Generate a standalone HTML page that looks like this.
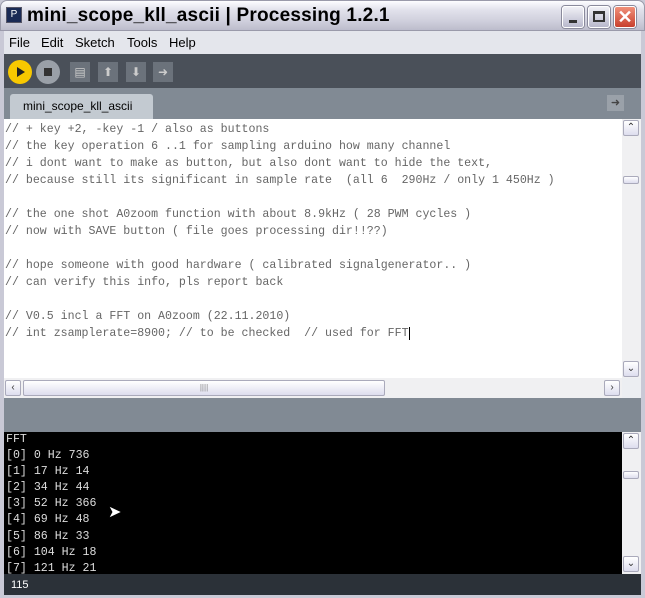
<!DOCTYPE html>
<html><head><style>
*{margin:0;padding:0;box-sizing:border-box}
body{width:645px;height:598px;overflow:hidden;background:#c9c9d6;position:relative;font-family:"Liberation Sans",sans-serif}
.abs{position:absolute}
.title{left:0;top:0;width:645px;height:31px;background:linear-gradient(#fdfdff,#e2e2ec 30%,#cfcfdc 70%,#bcbccc);border-radius:7px 7px 0 0;border:1px solid #9a9aaa}
.title span{position:absolute;left:26px;top:4px;color:#000;font-weight:bold;font-size:19px;letter-spacing:0.2px}
.mono{font-family:"Liberation Mono",monospace;font-size:11.6px;white-space:pre}
.btn{position:absolute;top:5px;width:22px;height:22px;border:1px solid #fff;border-radius:3px;background:linear-gradient(#f0f0f6,#b8b8cc);box-shadow:0 0 0 1px #8a8a9c}
.tb{position:absolute;top:62px;width:20px;height:20px;background:#6b727b}
.sb{background:#f0f0f2}
.arr{position:absolute;width:16px;height:16px;border:1px solid #aab;background:linear-gradient(#fff,#dde);border-radius:2px;font-size:10px;text-align:center;line-height:14px;color:#333}
</style></head><body>
<div class="abs title"><div class="abs" style="left:5px;top:6px;width:16px;height:16px;background:#1a2a55;border:1px solid #556;color:#fff;font-size:10px;line-height:14px;text-align:center">P</div><span>mini_scope_kll_ascii | Processing 1.2.1</span>
<div class="btn" style="left:561px"><div class="abs" style="left:6px;top:13px;width:8px;height:3px;background:#333"></div></div>
<div class="btn" style="left:587px"><div class="abs" style="left:4px;top:4px;width:12px;height:11px;border:2px solid #333;border-top-width:3px"></div></div>
<div class="btn" style="left:613px;background:linear-gradient(#f0907a,#c8402e);color:#fff;font-size:18px;font-weight:bold;text-align:center;line-height:20px">✕</div>
</div>
<div class="abs" style="left:4px;top:31px;width:637px;height:563px;background:#eceef2"></div>
<div class="abs" style="left:4px;top:31px;width:637px;height:23px;background:#e4e6ec;font-size:13px;color:#000"><span class="abs" style="left:5px;top:4px">File</span><span class="abs" style="left:37px;top:4px">Edit</span><span class="abs" style="left:71px;top:4px">Sketch</span><span class="abs" style="left:123px;top:4px">Tools</span><span class="abs" style="left:165px;top:4px">Help</span></div>
<div class="abs" style="left:4px;top:54px;width:637px;height:34px;background:#4a5059"></div>
<div class="abs" style="left:8px;top:60px;width:24px;height:24px;border-radius:50%;background:#f8c800"><div class="abs" style="left:9px;top:7px;border-left:8px solid #222;border-top:5px solid transparent;border-bottom:5px solid transparent"></div></div>
<div class="abs" style="left:36px;top:60px;width:24px;height:24px;border-radius:50%;background:#9aa0a8"><div class="abs" style="left:8px;top:8px;width:8px;height:8px;background:#333"></div></div>
<div class="tb" style="left:70px;color:#ccc;font-size:12px;text-align:center;line-height:20px">▤</div>
<div class="tb" style="left:98px;color:#ccc;font-size:12px;text-align:center;line-height:20px">⬆</div>
<div class="tb" style="left:126px;color:#ccc;font-size:12px;text-align:center;line-height:20px">⬇</div>
<div class="tb" style="left:153px;color:#ccc;font-size:12px;text-align:center;line-height:20px">➜</div>
<div class="abs" style="left:4px;top:88px;width:637px;height:31px;background:#818a94"></div>
<div class="abs" style="left:10px;top:94px;width:143px;height:25px;background:#c3cad1;border-radius:3px 3px 0 0;font-size:12px;color:#000;padding:5px 0 0 13px">mini_scope_kll_ascii</div>
<div class="abs" style="left:607px;top:95px;width:17px;height:16px;background:#9aa1a9;color:#444;font-size:11px;text-align:center;line-height:16px">➜</div>
<div class="abs" style="left:4px;top:119px;width:618px;height:259px;background:#fff"></div>
<div class="abs mono" style="left:5px;top:121px;line-height:17px;color:#666">// + key +2, -key -1 / also as buttons
// the key operation 6 ..1 for sampling arduino how many channel
// i dont want to make as button, but also dont want to hide the text,
// because still its significant in sample rate  (all 6  290Hz / only 1 450Hz )

// the one shot A0zoom function with about 8.9kHz ( 28 PWM cycles )
// now with SAVE button ( file goes processing dir!!??)

// hope someone with good hardware ( calibrated signalgenerator.. )
// can verify this info, pls report back

// V0.5 incl a FFT on A0zoom (22.11.2010)
// int zsamplerate=8900; // to be checked  // used for FFT<span style="border-left:1px solid #000"></span></div>
<div class="abs sb" style="left:622px;top:119px;width:19px;height:259px"></div>
<div class="arr" style="left:623px;top:120px">⌃</div>
<div class="arr" style="left:623px;top:176px;height:8px"></div>
<div class="arr" style="left:623px;top:361px">⌄</div>
<div class="abs sb" style="left:4px;top:378px;width:618px;height:20px"></div>
<div class="arr" style="left:5px;top:380px">‹</div>
<div class="abs" style="left:23px;top:380px;width:362px;height:16px;border:1px solid #aab;background:linear-gradient(#fff,#dde);border-radius:2px;font-size:8px;text-align:center;color:#888;line-height:14px">||||</div>
<div class="arr" style="left:604px;top:380px">›</div>
<div class="abs" style="left:4px;top:398px;width:637px;height:34px;background:#818a94"></div>
<div class="abs" style="left:4px;top:432px;width:618px;height:142px;background:#000"></div>
<div class="abs mono" style="left:6px;top:432px;line-height:16.1px;color:#ddd">FFT
[0] 0 Hz 736
[1] 17 Hz 14
[2] 34 Hz 44
[3] 52 Hz 366
[4] 69 Hz 48
[5] 86 Hz 33
[6] 104 Hz 18
[7] 121 Hz 21</div>
<div class="abs" style="left:108px;top:502px;color:#fff;font-size:16px">➤</div>
<div class="abs sb" style="left:622px;top:432px;width:19px;height:142px"></div>
<div class="arr" style="left:623px;top:433px">⌃</div>
<div class="arr" style="left:623px;top:471px;height:8px"></div>
<div class="arr" style="left:623px;top:556px">⌄</div>
<div class="abs" style="left:4px;top:574px;width:637px;height:21px;background:#2b3138;color:#fff;font-size:11px;padding:5px 0 0 7px">115</div>
</body></html>
